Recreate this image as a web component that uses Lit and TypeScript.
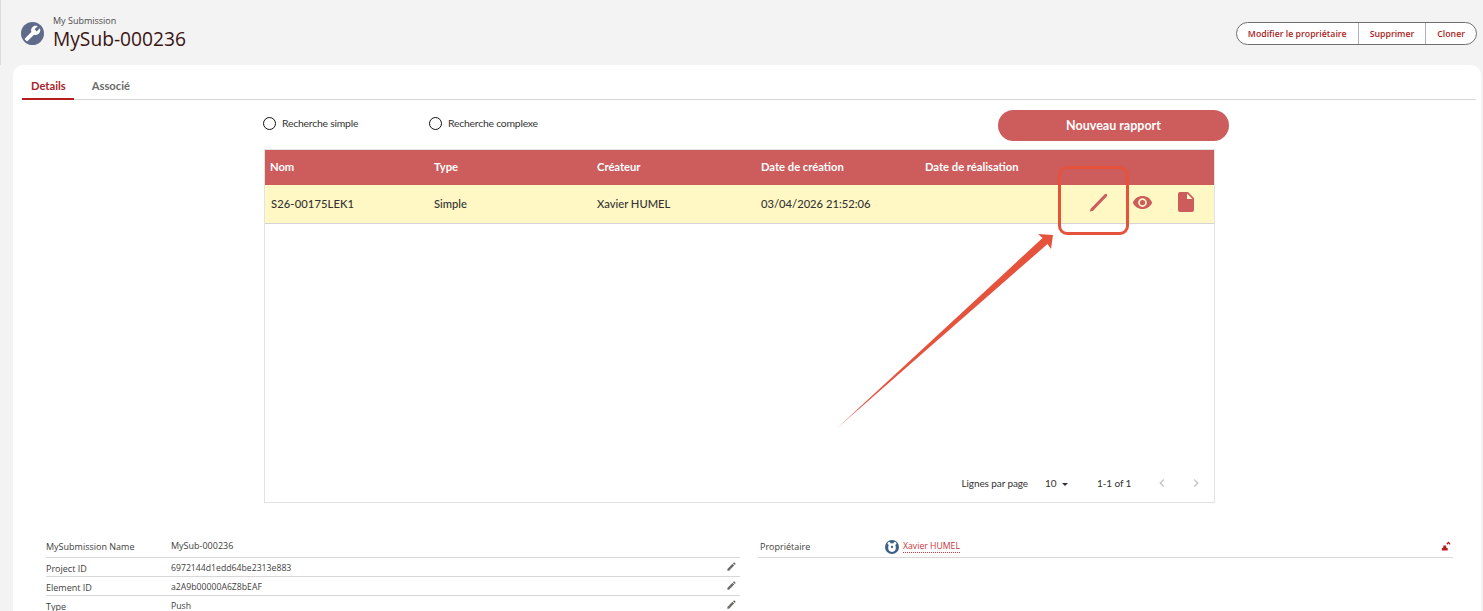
import { LitElement, html, css, svg } from 'lit';
import { customElement } from 'lit/decorators.js';

const editIcon = svg`<path d="M3 17.25V21h3.75L17.81 9.94l-3.75-3.75L3 17.25zM20.71 7.04a1 1 0 0 0 0-1.41l-2.34-2.34a1 1 0 0 0-1.41 0l-1.83 1.83 3.75 3.75 1.83-1.83z"/>`;

const columns = ['Nom', 'Type', 'Créateur', 'Date de création', 'Date de réalisation'];
const cells = ['S26-00175LEK1', 'Simple', 'Xavier HUMEL', '03/04/2026 21:52:06', ''];
const fields = [
  { label: 'MySubmission Name', value: 'MySub-000236', editable: false },
  { label: 'Project ID', value: '6972144d1edd64be2313e883', editable: true },
  { label: 'Element ID', value: 'a2A9b00000A6Z8bEAF', editable: true },
  { label: 'Type', value: 'Push', editable: true },
];

@customElement('app-root')
export class AppRoot extends LitElement {
  static styles = css`
    :host {
      display: block;
      height: 611px;
      overflow: hidden;
      position: relative;
      background: #f3f3f3;
      font-family: Lato, 'Liberation Sans', sans-serif;
      color: #2b2826;
    }

    .page-header {
      display: flex;
      justify-content: space-between;
      height: 65px;
      padding: 0 6px 0 21px;
      border-left: 1px solid #dcdcdc;
      box-sizing: border-box;
    }

    .title-block {
      display: flex;
      align-items: flex-start;
      gap: 9px;
      padding-top: 15px;
    }

    .object-icon {
      width: 23px;
      height: 23px;
      margin-top: 7px;
      margin-left: -1px;
      border-radius: 50%;
      background: #5f6b8b;
      display: flex;
      align-items: center;
      justify-content: center;
    }

    .object-icon svg {
      width: 17px;
      height: 17px;
      fill: #fff;
      transform: scaleX(-1);
    }

    .eyebrow {
      font-family: 'Open Sans', sans-serif;
      font-size: 9px;
      line-height: 12px;
      color: #4a4a4a;
    }

    .title {
      font-family: 'Open Sans', sans-serif;
      font-size: 19.2px;
      line-height: 24px;
      color: #3a1414;
    }

    .actions {
      display: flex;
      align-self: flex-start;
      margin-top: 22px;
      height: 23px;
      border: 1px solid #706e6b;
      border-radius: 12px;
      background: #fff;
      box-sizing: border-box;
    }

    .actions span {
      display: flex;
      align-items: center;
      padding: 0 11px;
      font-family: 'Open Sans', sans-serif;
      font-size: 8.75px;
      font-weight: 600;
      color: #a81e1e;
      border-left: 1px solid #b0b0b0;
    }

    .actions span:first-child {
      border-left: none;
    }

    .card {
      margin-left: 13px;
      margin-right: 2px;
      height: 546px;
      background: #fff;
      border-radius: 10px 10px 0 0;
      overflow: hidden;
    }

    .tabs {
      display: flex;
      margin: 7px 5px 0 9px;
      height: 27px;
      border-bottom: 1px solid #d8d8d8;
    }

    .tab {
      padding: 0 9px;
      height: 27px;
      line-height: 28px;
      font-size: 11.2px;
      font-weight: 700;
      color: #6b6b6b;
    }

    .tab.active {
      color: #a8232a;
      border-bottom: 2px solid #b91c1c;
      height: 26px;
      padding-right: 8px;
      margin-right: 9px;
    }

    .report {
      width: 951px;
      margin-left: 251px;
    }

    .toolbar {
      display: flex;
      align-items: flex-start;
      height: 49px;
      padding-top: 10px;
      margin-left: -1px;
      box-sizing: border-box;
    }

    .radio {
      display: flex;
      align-items: center;
      gap: 6px;
      margin-top: 7px;
      font-size: 10.4px;
      letter-spacing: -0.22px;
      color: #333;
    }

    .radio i {
      width: 11px;
      height: 11px;
      border: 1.8px solid #111;
      border-radius: 50%;
    }

    .radio b {
      font-weight: 400;
      margin-top: -2px;
    }

    .radio.simple {
      width: 166px;
    }

    .new-report {
      width: 231px;
      height: 31px;
      margin-left: auto;
      margin-right: -14px;
      border-radius: 16px;
      background: #cd5c5c;
      color: #fff;
      font-size: 12.5px;
      font-weight: 700;
      display: flex;
      align-items: center;
      justify-content: center;
    }

    .table {
      height: 354px;
      border: 1px solid #e2e2e2;
      display: flex;
      flex-direction: column;
      box-sizing: border-box;
    }

    .row {
      display: grid;
      grid-template-columns: 164px 163px 164px 164px 164px 1fr;
      align-items: center;
      font-size: 11.2px;
      font-weight: 700;
    }

    .row > span {
      padding-left: 5px;
    }

    .row.head {
      height: 35px;
      padding-bottom: 2px;
      box-sizing: border-box;
      background: #cd5c5c;
      color: #fff;
    }

    .row.body {
      height: 39px;
      background: #fff8c4;
      border-bottom: 1px solid #d4d4d4;
      box-sizing: border-box;
      color: #333;
      font-weight: 500;
    }

    .row.body > span {
      margin-bottom: 2px;
    }

    .row.body > span:first-child {
      padding-left: 6px;
      letter-spacing: 0.1px;
    }

    .row-actions {
      height: 38px;
      position: relative;
    }

    .row-actions svg {
      position: absolute;
      fill: #cd5c5c;
    }

    .pager {
      margin-top: auto;
      height: 38px;
      display: flex;
      align-items: center;
      justify-content: flex-end;
      padding: 0 10px 0 0;
      font-size: 10px;
      color: #333;
      letter-spacing: -0.1px;
    }

    .pager .size {
      display: flex;
      align-items: center;
      gap: 6px;
      margin-left: 17px;
      width: 52px;
    }

    .pager .caret {
      width: 0;
      height: 0;
      margin-top: 2px;
      border: 3.5px solid transparent;
      border-top: 3.5px solid #333;
      border-bottom: none;
    }

    .pager .range {
      width: 57px;
    }

    .pager svg {
      width: 16px;
      height: 16px;
      fill: #c4c4c4;
    }

    .pager svg + svg {
      margin-left: 18px;
    }

    .details {
      display: grid;
      grid-template-columns: 694px 695px;
      column-gap: 18px;
      margin: 34px 0 0 33px;
      font-family: 'Open Sans', sans-serif;
      font-size: 9px;
    }

    .field {
      display: flex;
      align-items: center;
      height: 19px;
      border-bottom: 1px solid #d8d8d8;
      box-sizing: border-box;
    }

    .field.first {
      height: 21px;
    }

    .field .label {
      width: 125px;
      color: #3e3e3c;
      font-weight: 500;
      padding-top: 2px;
    }

    .field .value {
      color: #3e3e3c;
      font-size: 8.7px;
      padding-top: 1px;
    }

    .field.first .label {
      padding-top: 0;
      padding-bottom: 2px;
    }

    .field.first .value {
      font-size: 9px;
      padding-top: 0;
      padding-bottom: 3px;
    }

    .field.owner-row .label {
      padding-left: 2px;
      padding-bottom: 1px;
      width: 125px;
    }

    .field svg.edit {
      margin-left: auto;
      margin-right: 3px;
      margin-bottom: 2px;
      width: 11px;
      height: 11px;
      fill: #706e6b;
    }

    .owner {
      display: flex;
      align-items: center;
      gap: 4px;
      font-size: 8.7px;
    }

    .owner a {
      color: #c8373d;
      border-bottom: 1px dotted #c8373d;
      line-height: 11px;
    }

    .owner svg {
      width: 14px;
      height: 14px;
    }

    svg.reassign {
      margin-left: auto;
      margin-right: 2px;
      margin-bottom: 2px;
      width: 10px;
      height: 10px;
      fill: #b91c1c;
    }

    .callout {
      position: absolute;
      left: 1058px;
      top: 166px;
      width: 71px;
      height: 69px;
      border: 3.5px solid #e5533d;
      border-radius: 9px;
      box-sizing: border-box;
    }

    .arrow {
      position: absolute;
      left: 0;
      top: 0;
      width: 1483px;
      height: 611px;
      pointer-events: none;
    }
  `;

  render() {
    return html`
      <header class="page-header">
        <div class="title-block">
          <div class="object-icon">
            <svg viewBox="0 0 24 24"><path d="M22.7 19l-9.1-9.1c.9-2.3.4-5-1.5-6.9-2-2-5-2.4-7.4-1.3L9 6 6 9 1.6 4.7C.4 7.1.9 10.1 2.9 12.1c1.9 1.9 4.6 2.4 6.9 1.5l9.1 9.1c.4.4 1 .4 1.4 0l2.3-2.3c.5-.4.5-1.1.1-1.4z"/></svg>
          </div>
          <div>
            <div class="eyebrow">My Submission</div>
            <div class="title">MySub-000236</div>
          </div>
        </div>
        <div class="actions">
          <span>Modifier le propriétaire</span>
          <span>Supprimer</span>
          <span>Cloner</span>
        </div>
      </header>

      <section class="card">
        <nav class="tabs">
          <div class="tab active">Details</div>
          <div class="tab">Associé</div>
        </nav>

        <div class="report">
          <div class="toolbar">
            <label class="radio simple"><i></i><b>Recherche simple</b></label>
            <label class="radio"><i></i><b>Recherche complexe</b></label>
            <div class="new-report">Nouveau rapport</div>
          </div>

          <div class="table">
            <div class="row head">
              ${columns.map((c) => html`<span>${c}</span>`)}
              <span></span>
            </div>
            <div class="row body">
              ${cells.map((c) => html`<span>${c}</span>`)}
              <div class="row-actions">
                <svg style="left:3px;top:5px" width="24" height="24" viewBox="0 0 24 24">
                  <path d="M3 21.500l.6-2.700L17.500 4.400c.7-.7 1.700-.7 2.300-.1.600.6.600 1.600-.1 2.300L5.800 20.900z"/>
                </svg>
                <svg style="left:47.500px;top:6.500px" width="21" height="21" viewBox="0 0 24 24">
                  <path d="M12 4.500C7 4.500 2.700 7.600 1 12c1.700 4.400 6 7.500 11 7.500s9.300-3.100 11-7.500c-1.700-4.400-6-7.500-11-7.500zM12 17a5 5 0 1 1 0-10 5 5 0 0 1 0 10zm0-8a3 3 0 1 0 0 6 3 3 0 0 0 0-6z"/>
                </svg>
                <svg style="left:90px;top:5px" width="24" height="24" viewBox="0 0 24 24">
                  <path d="M6 2a2 2 0 0 0-2 2v16a2 2 0 0 0 2 2h12a2 2 0 0 0 2-2V8l-6-6H6zm7 7V3.500L18.500 9H13z"/>
                </svg>
              </div>
            </div>
            <div class="pager">
              <span>Lignes par page</span>
              <span class="size">10 <i class="caret"></i></span>
              <span class="range">1-1 of 1</span>
              <svg viewBox="0 0 24 24"><path d="M15.400 7.400L14 6l-6 6 6 6 1.400-1.400L10.800 12z"/></svg>
              <svg viewBox="0 0 24 24"><path d="M8.600 7.400L10 6l6 6-6 6-1.400-1.400L13.200 12z"/></svg>
            </div>
          </div>
        </div>

        <div class="details">
          <div>
            ${fields.map(
              (f, i) => html`
                <div class="field ${i === 0 ? 'first' : ''}">
                  <span class="label">${f.label}</span>
                  <span class="value">${f.value}</span>
                  ${f.editable ? html`<svg class="edit" viewBox="0 0 24 24">${editIcon}</svg>` : ''}
                </div>
              `
            )}
          </div>
          <div>
            <div class="field first owner-row">
              <span class="label">Propriétaire</span>
              <span class="owner">
                <svg viewBox="0 0 24 24">
                  <circle cx="12" cy="12" r="12" fill="#3f5f86"/>
                  <circle cx="7" cy="6" r="2.500" fill="#fff"/>
                  <circle cx="17" cy="6" r="2.500" fill="#fff"/>
                  <ellipse cx="12" cy="13" rx="6.500" ry="7.500" fill="#fff"/>
                  <circle cx="12" cy="12" r="2" fill="#3f5f86"/>
                </svg>
                <a>Xavier HUMEL</a>
              </span>
              <svg class="reassign" viewBox="0 0 24 24">
                <path d="M6 11h6l1 6h3v6H2v-6h3z"/>
                <path d="M13 6l5-5 5 6-2 2-3-3-3 3z"/>
              </svg>
            </div>
          </div>
        </div>
      </section>

      <div class="callout"></div>
      <svg class="arrow" viewBox="0 0 1483 611">
        <defs>
          <linearGradient id="tail" gradientUnits="userSpaceOnUse" x1="835" y1="430" x2="860" y2="408">
            <stop offset="0" stop-color="#e5533d" stop-opacity="0.5"/>
            <stop offset="1" stop-color="#e5533d"/>
          </linearGradient>
        </defs>
        <polygon
          fill="url(#tail)"
          points="835,430 1042.500,238 1038,234 1053,235 1051,249 1047.500,244"
        />
      </svg>
    `;
  }
}
